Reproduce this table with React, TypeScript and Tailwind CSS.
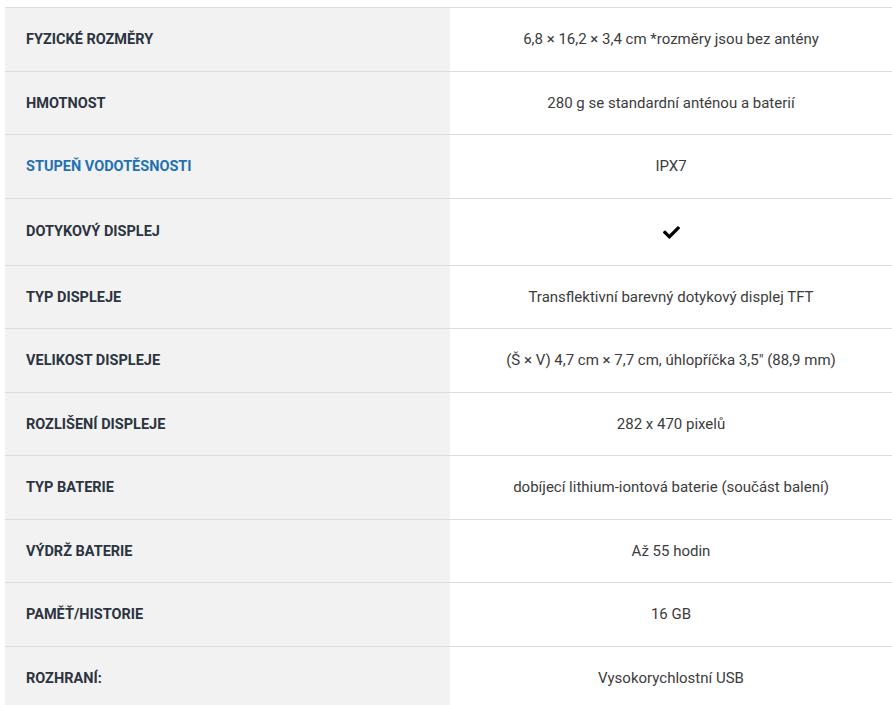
import { FaCheck } from 'react-icons/fa';

const rows: { label: string; value: string; highlight?: boolean; check?: boolean }[] = [
  { label: 'FYZICKÉ ROZMĚRY', value: '6,8 × 16,2 × 3,4 cm *rozměry jsou bez antény' },
  { label: 'HMOTNOST', value: '280 g se standardní anténou a baterií' },
  { label: 'STUPEŇ VODOTĚSNOSTI', value: 'IPX7', highlight: true },
  { label: 'DOTYKOVÝ DISPLEJ', value: '', check: true },
  { label: 'TYP DISPLEJE', value: 'Transflektivní barevný dotykový displej TFT' },
  { label: 'VELIKOST DISPLEJE', value: '(Š × V) 4,7 cm × 7,7 cm, úhlopříčka 3,5" (88,9 mm)' },
  { label: 'ROZLIŠENÍ DISPLEJE', value: '282 x 470 pixelů' },
  { label: 'TYP BATERIE', value: 'dobíjecí lithium-iontová baterie (součást balení)' },
  { label: 'VÝDRŽ BATERIE', value: 'Až 55 hodin' },
  { label: 'PAMĚŤ/HISTORIE', value: '16 GB' },
  { label: 'ROZHRANÍ:', value: 'Vysokorychlostní USB' },
];

const App = () => {
  return (
    <div className="bg-white pt-[7px] pl-[5px] font-['Roboto',sans-serif]">
      <table className="w-[887px] border-collapse">
        <tbody>
          {rows.map((r) => (
            <tr key={r.label} className="border-t border-[#dcdcdc]">
              <td
                className={`w-[445px] bg-[#f2f2f2] pl-[21px] pr-4 pt-[21px] pb-[19px] text-[14.5px] leading-[22.5px] font-bold ${
                  r.highlight ? 'text-[#2271b3]' : 'text-[#2c3440]'
                } ${r.check ? 'h-[67px]' : ''}`}
              >
                {r.label}
              </td>
              <td className="px-4 py-5 text-center text-[15px] leading-[22.5px] text-[#3c3c3c]">
                {r.check ? <FaCheck className="inline-block text-black" size={17} /> : r.value}
              </td>
            </tr>
          ))}
        </tbody>
      </table>
    </div>
  );
};

export default App;
